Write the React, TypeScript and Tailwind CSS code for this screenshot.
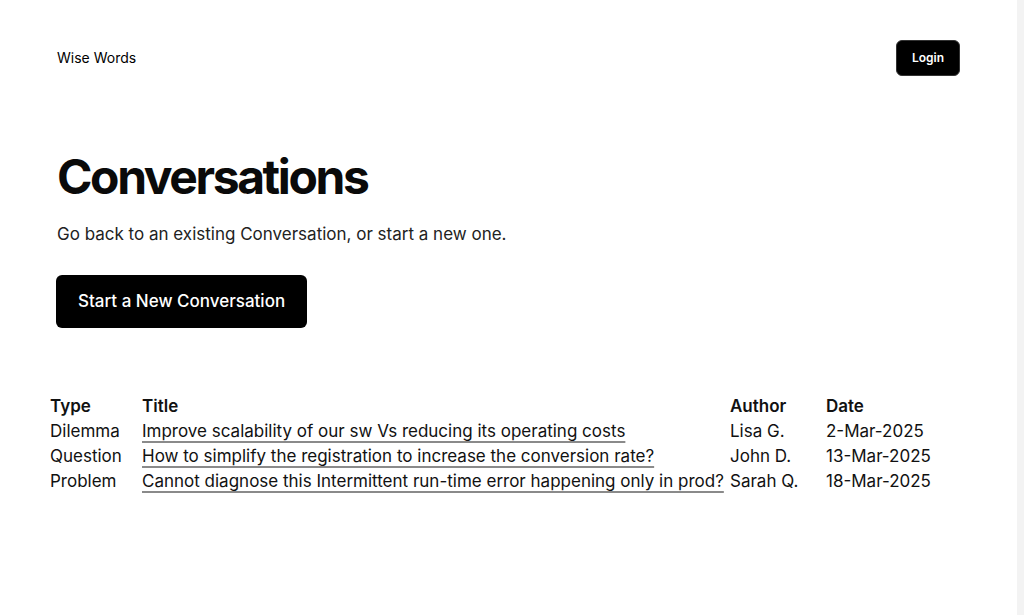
import React from "react";

const rows = [
  { type: "Dilemma", title: "Improve scalability of our sw Vs reducing its operating costs", author: "Lisa G.", date: "2-Mar-2025" },
  { type: "Question", title: "How to simplify the registration to increase the conversion rate?", author: "John D.", date: "13-Mar-2025" },
  { type: "Problem", title: "Cannot diagnose this Intermittent run-time error happening only in prod?", author: "Sarah Q.", date: "18-Mar-2025" },
];

export default function App() {
  return (
    <div className="flex min-h-[615px] w-full bg-white text-[#111]" style={{ fontFamily: "Inter, 'Noto Sans', sans-serif" }}>
      <div className="flex-1">
        <header className="flex items-center justify-between px-[57px] pt-10">
          <span className="text-sm text-black">Wise Words</span>
          <button className="h-9 w-16 rounded-md border border-[#333] bg-black text-xs font-semibold text-white">Login</button>
        </header>
        <main className="px-[57px] pt-[77px]">
          <h1 className="text-5xl leading-none font-bold tracking-[-0.05em] text-[#0a0a0a]">Conversations</h1>
          <p className="mt-[21px] text-[17px] leading-6 text-[#222]">Go back to an existing Conversation, or start a new one.</p>
          <button className="-ml-px mt-[29px] h-[53px] rounded-md bg-black px-[22px] pt-px text-[17px] font-medium text-white">Start a New Conversation</button>
          <div className="-ml-[7px] mt-[66px] grid grid-cols-[92px_588px_96px_auto] text-[17px] leading-[25px]">
            <div className="font-semibold">Type</div>
            <div className="font-semibold">Title</div>
            <div className="font-semibold">Author</div>
            <div className="font-semibold">Date</div>
            {rows.map((r) => (
              <React.Fragment key={r.title}>
                <div>{r.type}</div>
                <div className="whitespace-nowrap">
                  <a href="#" className="underline decoration-[#8a8a8a] decoration-[1.5px] underline-offset-[3.5px]">{r.title}</a>
                </div>
                <div>{r.author}</div>
                <div>{r.date}</div>
              </React.Fragment>
            ))}
          </div>
        </main>
      </div>
      <div className="w-[7px] shrink-0 bg-[#f3f3f3]" />
    </div>
  );
}
